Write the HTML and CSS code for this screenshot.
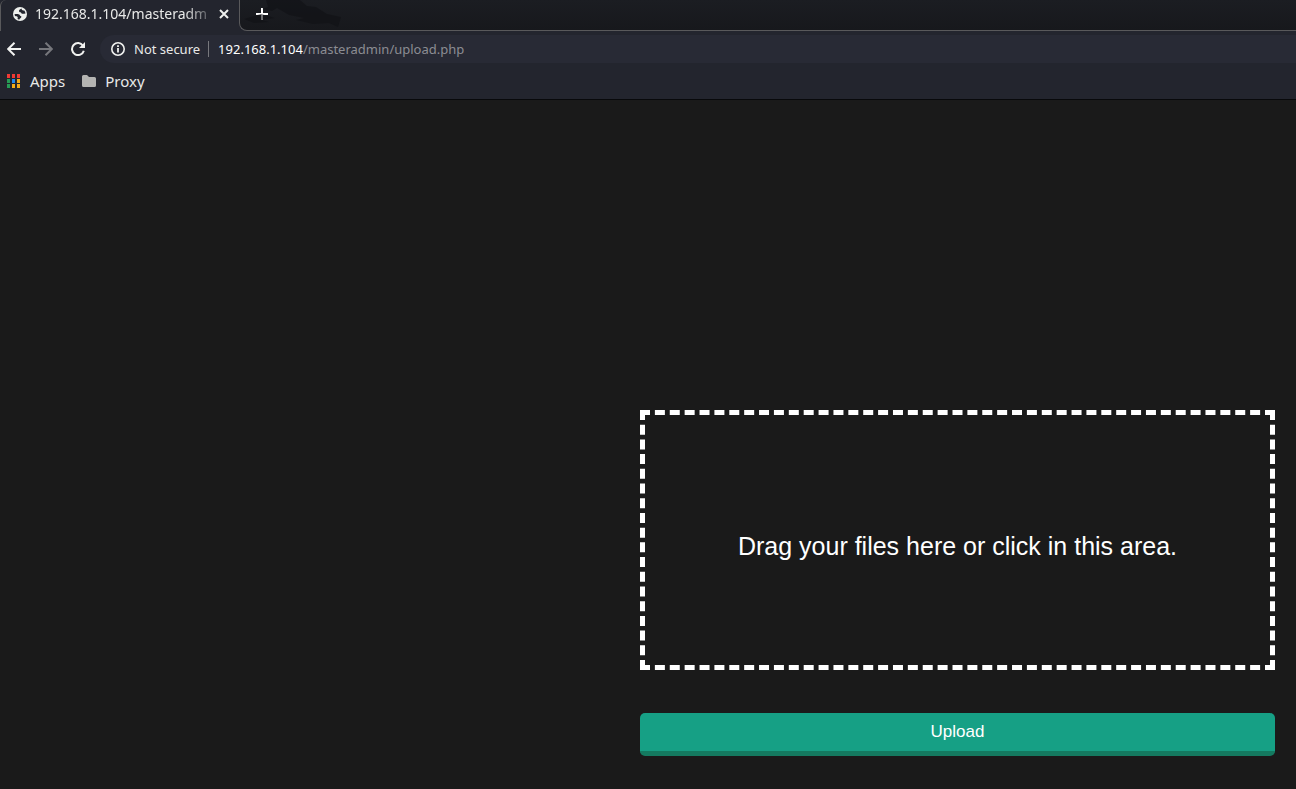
FILE: index.html
```
<!DOCTYPE html>
<html lang="en">
<head>
<meta charset="utf-8">
<title>192.168.1.104/masteradmin/upload.php</title>
<link rel="stylesheet" href="styles.css">
</head>
<body>
<header class="browser">
  <div class="tabstrip">
    <div class="tab">
      <svg class="globe" viewBox="0 0 14 14" aria-hidden="true"><circle cx="7" cy="7" r="7" fill="#eef0ee"/><path d="M8.600 1.600C7.500 2.200 6 2.800 6 4c0 .9.700 1.200 1.500 1.200.6 0 .7 1 1.400 1.500.7.400 2.100 0 3.600-.3a5.600 5.600 0 0 0-1.200-3c-.8.2-1.700.2-2.200-.3-.4-.4-.6-.9-.5-1.500zM1.500 7.200c1.600-.2 3.500-.2 4.600.3.900.4.700 1.300 1.500 1.500.8.200 1 .9.500 1.500-.6.700-1.400 1-1.600 2a5.600 5.600 0 0 1-1.900-.6c0-1 .4-1.400 0-2-.5-.7-1.700-.6-2.500-.9a5.600 5.600 0 0 1-.6-1.800z" fill="#23252e"/></svg>
      <span class="tab-title">192.168.1.104/masteradm</span>
      <button class="icon-button close" type="button" aria-label="Close tab"><svg viewBox="0 0 10 10"><path d="M1 1l8 8M9 1L1 9" stroke="#eef0ee" stroke-width="2"/></svg></button>
    </div>
    <div class="strip">
      <button class="icon-button new-tab" type="button" aria-label="New tab"><svg viewBox="0 0 12 12" shape-rendering="crispEdges"><path d="M5 0h2v5h5v2H7v5H5V7H0V5h5z" fill="#fff"/></svg></button>
      <svg class="dragon" viewBox="0 0 110 30" aria-hidden="true"><path d="M24 0h34l7 6 9 1 11 7 14 3-3 10-9-4-16 1-17-4 8-2-15-3-12-7-5 3-10-2 6-2zM2 19l17-5 14 4-13 2 7 2-15 1z"/></svg>
    </div>
  </div>
  <div class="toolbar">
    <nav class="nav" aria-label="Navigation">
      <button class="icon-button nav-button" type="button" aria-label="Back"><svg viewBox="0 0 14 14"><path d="M14 7H1.500M7.500 .7L1.200 7l6.300 6.300" fill="none" stroke="#f1f2f0" stroke-width="2"/></svg></button>
      <button class="icon-button nav-button" type="button" aria-label="Forward"><svg viewBox="0 0 14 14"><path d="M0 7h12.500M6.500 .7L12.800 7l-6.300 6.300" fill="none" stroke="#76777c" stroke-width="2"/></svg></button>
      <button class="icon-button nav-button" type="button" aria-label="Reload"><svg viewBox="0 0 14 14"><path d="M12 3.700A6 6 0 1 0 12.800 8.700" fill="none" stroke="#f1f2f0" stroke-width="2"/><path d="M14 0v6H8z" fill="#f1f2f0"/></svg></button>
    </nav>
    <div class="address">
      <svg class="info" viewBox="0 0 14 14" aria-hidden="true"><circle cx="7" cy="7" r="6.200" fill="none" stroke="#f1f2f0" stroke-width="1.600"/><path d="M7 6v4.500M7 3.300v1.600" stroke="#f1f2f0" stroke-width="1.800"/></svg>
      <span class="security">Not secure</span>
      <span class="url">192.168.1.104<span class="path">/masteradmin/upload.php</span></span>
    </div>
  </div>
  <nav class="bookmarks" aria-label="Bookmarks">
    <a class="bookmark" href="#"><svg class="apps" viewBox="0 0 14 14" aria-hidden="true"><path fill="#f03a34" d="M0 0h3v4H0zM5 0h3v4H5zM10 0h3v4h-3z"/><path fill="#279b55" d="M0 5h3v4H0zM0 10h3v4H0z"/><path fill="#2288ed" d="M5 5h3v4H5z"/><path fill="#f4ab19" d="M10 5h3v4h-3zM5 10h3v4H5zM10 10h3v4h-3z"/></svg>Apps</a>
    <a class="bookmark" href="#"><svg class="folder" viewBox="0 0 14 12" aria-hidden="true"><path fill="#b4b4b2" d="M1.500 0H5l2 2h5.500A1.500 1.500 0 0 1 14 3.500v7a1.500 1.500 0 0 1-1.500 1.500h-11A1.500 1.500 0 0 1 0 10.500v-9A1.500 1.500 0 0 1 1.500 0z"/></svg>Proxy</a>
  </nav>
</header>
<main class="page">
  <form class="upload">
    <label class="dropzone"><input class="file-input" type="file" multiple>Drag your files here or click in this area.</label>
    <button class="submit" type="submit">Upload</button>
  </form>
</main>
</body>
</html>
```
FILE: styles.css
```
* { box-sizing: border-box; }
body {
  margin: 0;
  min-height: 100vh;
  display: flex;
  flex-direction: column;
  background: #1a1a1a;
  font-family: "Liberation Sans", Arial, sans-serif;
}
.browser {
  background: #23252e;
  border-bottom: 1px solid #08090b;
  color: #e8e9e8;
  font-family: "Noto Sans", sans-serif;
}
.icon-button {
  display: flex;
  align-items: center;
  justify-content: center;
  padding: 0;
  border: 0;
  background: none;
}
.tabstrip {
  display: flex;
  height: 31px;
}
.tab {
  display: flex;
  align-items: center;
  width: 239px;
  padding: 0 10px 3px 12px;
  border-left: 1px solid #59595b;
  border-radius: 6px 0 0 0;
}
.strip {
  display: flex;
  flex: 1;
  background: linear-gradient(#1b1d22, #17181c);
  border-left: 1px solid #59595b;
  border-bottom: 1px solid #59595b;
  border-bottom-left-radius: 8px;
}
.globe { flex: none; width: 14px; height: 14px; }
.tab-title {
  flex: 1;
  margin: 0 2px 0 8px;
  overflow: hidden;
  white-space: nowrap;
  font-size: 14px;
  line-height: 20px;
  mask-image: linear-gradient(to right, #000 82%, transparent);
}
.close svg { width: 10px; height: 10px; }
.new-tab { position: relative; width: 44px; padding-bottom: 2px; }
.new-tab svg { width: 12px; height: 12px; }
.dragon { width: 110px; height: 30px; margin-left: -42px; fill: #101115; opacity: 0.6; }
.toolbar {
  display: flex;
  align-items: center;
  height: 36px;
  padding-left: 6px;
}
.nav { display: flex; gap: 16px; width: 94px; }
.nav-button { width: 16px; height: 16px; }
.nav-button svg { width: 14px; height: 14px; }
.address {
  display: flex;
  flex: 1;
  align-items: center;
  height: 28px;
  padding-left: 11px;
  border-radius: 14px 0 0 14px;
  background: #282a35;
  font-size: 13px;
  line-height: 18px;
}
.info { width: 14px; height: 14px; margin-right: 9px; }
.security {
  padding-right: 8px;
  border-right: 1px solid #77787d;
  line-height: 16px;
}
.url { margin-left: 9px; color: #fff; }
.path { color: #8c8d93; }
.bookmarks {
  display: flex;
  gap: 17px;
  height: 32px;
  padding: 4px 7px 8px;
}
.bookmark {
  display: flex;
  align-items: center;
  color: inherit;
  font-size: 15px;
  line-height: 18px;
  text-decoration: none;
}
.apps { width: 14px; height: 14px; margin-right: 9px; }
.folder { width: 14px; height: 12px; margin-right: 9px; }
.page {
  display: flex;
  flex: 1;
  flex-direction: column;
  justify-content: flex-end;
  padding: 33px 21px;
}
.upload {
  display: flex;
  flex-direction: column;
  gap: 43px;
  width: 50.64%;
  margin-left: auto;
}
.dropzone {
  position: relative;
  display: flex;
  align-items: center;
  justify-content: center;
  min-height: 260px;
  padding-top: 12px;
  border: 5px dashed #fff;
  color: #fff;
  font-size: 25px;
  line-height: 30px;
  text-align: center;
  cursor: pointer;
}
.file-input {
  position: absolute;
  inset: 0;
  width: 100%;
  height: 100%;
  opacity: 0;
  cursor: pointer;
}
.submit {
  min-height: 43px;
  padding: 0;
  border: 0;
  border-bottom: 5px solid #147a60;
  border-radius: 5px;
  background: #16a085;
  color: #fff;
  font-family: inherit;
  font-size: 17px;
  line-height: 38px;
  cursor: pointer;
}
```
